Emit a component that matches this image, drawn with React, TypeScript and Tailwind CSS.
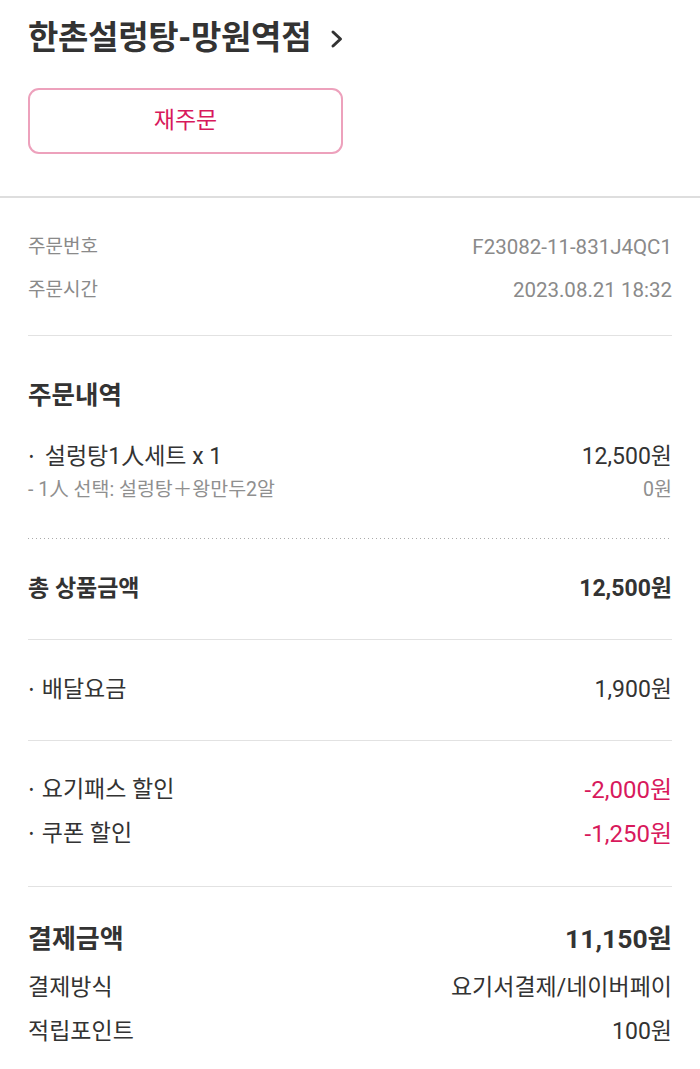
const font = "font-['Roboto','Noto_Sans_CJK_KR',sans-serif]";

function Row({ label, value, className = '', valueClass = '' }: { label: string; value: string; className?: string; valueClass?: string }) {
  return (
    <div className={`flex items-center justify-between ${className}`}>
      <span>{label}</span>
      <span className={valueClass}>{value}</span>
    </div>
  );
}

function Bullet({ children, gap = 'mr-[8px]' }: { children: string; gap?: string }) {
  return (
    <span className="flex items-center">
      <span className={`ml-[1px] text-[14px] ${gap}`}>•</span>
      {children}
    </span>
  );
}

export default function App() {
  return (
    <main className={`min-h-screen bg-white text-[#333] ${font}`}>
      <header className="px-[28px]">
        <div className="flex h-[76px] items-center gap-[18px]">
          <h1 className="text-[33px] font-bold tracking-[-0.3px] text-[#333]">한촌설렁탕-망원역점</h1>
          <svg width="16" height="20" viewBox="0 0 16 20" className="mt-[2px]">
            <path d="M4 3 L11.5 10 L4 17" fill="none" stroke="#333" strokeWidth="3" strokeLinecap="round" strokeLinejoin="round" />
          </svg>
        </div>
        <button
          type="button"
          className="mt-[12px] flex h-[66px] w-[315px] items-center justify-center rounded-[11px] border-2 border-[#eda1bc] text-[23px] text-[#d8195c]"
        >
          재주문
        </button>
      </header>
      <div className="mt-[42px] h-[2px] bg-[#dedede]" />

      <section className="px-[28px]">
        <div className="pt-[28px] pb-[23px] text-[#8a8a8a]">
          <Row label="주문번호" value="F23082-11-831J4QC1" className="h-[43px] text-[19px]" valueClass="text-[20.5px]" />
          <Row label="주문시간" value="2023.08.21 18:32" className="h-[43px] text-[19px]" valueClass="text-[20.5px]" />
        </div>
        <div className="h-px bg-[#e2e2e2]" />

        <div className="pt-[39px] pb-[33px]">
          <h2 className="flex h-[40px] items-center text-[25.5px] font-bold text-[#333]">주문내역</h2>
          <div className="mt-[24px] flex h-[36px] items-center justify-between text-[23px]">
            <Bullet gap="mr-[11px]">설렁탕1人세트 x 1</Bullet>
            <span>12,500원</span>
          </div>
          <Row label="- 1人 선택: 설렁탕＋왕만두2알" value="0원" className="h-[30px] text-[19.5px] text-[#8f8f8f]" />
        </div>
        <div className="h-px bg-[linear-gradient(90deg,#aaaaaa_1px,transparent_1px)] bg-[length:4px_1px] bg-repeat-x" />

        <Row label="총 상품금액" value="12,500원" className="h-[100px] text-[23px] font-bold" />
        <div className="h-px bg-[#e2e2e2]" />

        <div className="flex h-[100px] items-center justify-between text-[23px]">
          <Bullet>배달요금</Bullet>
          <span>1,900원</span>
        </div>
        <div className="h-px bg-[#e2e2e2]" />

        <div className="pt-[27px] pb-[30px] text-[23px]">
          <div className="flex h-[44px] items-center justify-between">
            <Bullet>요기패스 할인</Bullet>
            <span className="text-[24px] text-[#d8195c]">-2,000원</span>
          </div>
          <div className="flex h-[44px] items-center justify-between">
            <Bullet>쿠폰 할인</Bullet>
            <span className="text-[24px] text-[#d8195c]">-1,250원</span>
          </div>
        </div>
        <div className="h-px bg-[#e2e2e2]" />

        <div className="pt-[33px] pb-[20px]">
          <Row label="결제금액" value="11,150원" className="h-[38px] text-[26px] font-bold" valueClass="text-[26.5px]" />
          <Row label="결제방식" value="요기서결제/네이버페이" className="mt-[8px] h-[44px] text-[23px]" />
          <Row label="적립포인트" value="100원" className="h-[44px] text-[23px]" />
        </div>
      </section>
    </main>
  );
}
